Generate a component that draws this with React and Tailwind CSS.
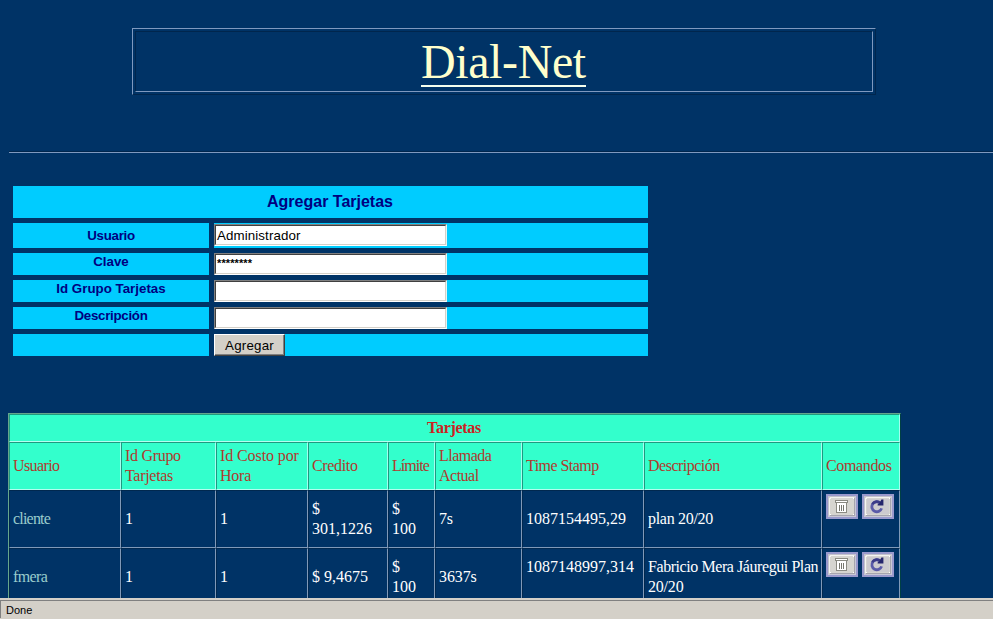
const field =
  "h-[22px] w-[233px] border border-t-[#808080] border-l-[#808080] border-r-[#e4f6f4] border-b-white bg-white";
const fieldInner =
  "flex h-[20px] items-center border border-t-[#404040] border-l-[#404040] border-r-[#d4d0c8] border-b-[#d4d0c8] pl-px text-[13.33px] leading-none text-black";
const label = "flex justify-center bg-[#00ccff] text-[13.33px] font-bold leading-[17px] text-[#000080]";

function FormRow({ text, tracking = "", height = "h-[22px]", pad = "", inputPad = "", children }) {
  return (
    <div className={`grid grid-cols-[196px_434px] gap-[5px] ${height}`}>
      <div className={`${label} ${pad}`}>
        <span className={tracking}>{text}</span>
      </div>
      <div className={`bg-[#00ccff] ${inputPad}`}>{children}</div>
    </div>
  );
}

function Field({ children }) {
  return (
    <div className={field}>
      <div className={fieldInner}>{children}</div>
    </div>
  );
}

function Cell({ head, color = "text-white", lines }) {
  const edge = head
    ? "bg-[#33ffcc] border-t-[#1f9980] border-l-[#1f9980] border-r-[#a3fff0] border-b-[#b3fff0]"
    : "border-t-[#00284f] border-l-[#00284f] border-r-[#8099b8] border-b-[#8099b8]";
  return (
    <div className={`flex flex-col justify-center whitespace-pre border pl-[3px] leading-5 ${edge} ${head ? "text-[#b03a2e]" : color}`}>
      {lines.map(([text, tracking], i) => (
        <div key={i} className={`h-5 ${tracking}`}>{text}</div>
      ))}
    </div>
  );
}

function ButtonFace({ children }) {
  return (
    <svg width="32" height="25" viewBox="-2 -2 32 25" shapeRendering="crispEdges">
      <rect x="-2" y="-2" width="32" height="25" fill="#9999cc" />
      <rect width="28" height="21" fill="#d6d5d0" />
      <path d="M0 0H28V1H1V21H0Z" fill="#c3c2cc" />
      <path d="M2 1H26V2H3V3H2V19H1V2H2Z" fill="#f4f4f2" />
      <path d="M26 2H27V20H2V19H26Z" fill="#a6a5ae" />
      <path d="M25 2H26V3H25ZM2 18H3V19H2ZM25 18H26V19H25Z" fill="#ffffff" />
      <path d="M27 0H28V21H0V20H27Z" fill="#c9c8d6" />
      {children}
    </svg>
  );
}

function TrashButton() {
  return (
    <ButtonFace>
      <rect x="7.5" y="4.5" width="12" height="2" fill="#fff" stroke="#8a8a82" />
      <rect x="8.5" y="6.5" width="10" height="10" fill="#fff" stroke="#8a8a82" />
      <path d="M11.5 9V15M13.5 9V15M15.5 9V15" stroke="#77776f" fill="none" />
    </ButtonFace>
  );
}

function ReloadButton() {
  return (
    <ButtonFace>
      <rect x="3" y="3" width="22" height="15" fill="#cdcbcf" />
      <g shapeRendering="geometricPrecision">
        <path d="M16.4 7.2A5 5 0 1 0 17.6 12.4" fill="none" stroke="#5a5aa8" strokeWidth="2.8" />
        <path d="M16 6.8A5 5 0 0 0 8.4 8.2" fill="none" stroke="#3a3a88" strokeWidth="2.6" />
        <path d="M19.4 3.4V9.6H13.6V8.6L15.6 7L17.4 3.4Z" fill="#25256c" />
      </g>
    </ButtonFace>
  );
}

function Commands() {
  return (
    <div className="flex gap-1 border border-t-[#00284f] border-l-[#00284f] border-r-[#8099b8] border-b-[#8099b8] pl-[3px] pt-[3px]">
      <TrashButton />
      <ReloadButton />
    </div>
  );
}

const headings = [
  [["Usuario", "tracking-[-0.6px]"]],
  [["Id Grupo", "tracking-[-0.3px]"], ["Tarjetas", "tracking-[-0.3px]"]],
  [["Id Costo por", "tracking-[-0.1px]"], ["Hora", "tracking-[-0.25px]"]],
  [["Credito", "tracking-[-0.35px]"]],
  [["Límite", "tracking-[-0.95px]"]],
  [["Llamada", "tracking-[-0.5px]"], ["Actual", "tracking-[-0.5px]"]],
  [["Time Stamp", "tracking-[-0.55px]"]],
  [["Descripción", "tracking-[-0.5px]"]],
  [["Comandos", "tracking-[-0.35px]"]],
];

const rows = [
  [
    [["cliente", "tracking-[-0.8px]"]],
    [["1", ""]],
    [["1", ""]],
    [["$", ""], ["301,1226", ""]],
    [["$", ""], ["100", ""]],
    [["7s", "tracking-[-0.2px]"]],
    [["1087154495,29", ""]],
    [["plan 20/20", "tracking-[-0.3px]"]],
  ],
  [
    [["fmera", "tracking-[-0.6px]"]],
    [["1", ""]],
    [["1", ""]],
    [["$ 9,4675", ""]],
    [["$", ""], ["100", ""]],
    [["3637s", "tracking-[-0.1px]"]],
    [["1087148997,314", ""], ["", ""]],
    [["Fabricio Mera Jáuregui Plan", "tracking-[-0.43px]"], ["20/20", "tracking-[-0.2px]"]],
  ],
];

const columns = "grid grid-cols-[112px_95px_92px_80px_47px_87px_122px_178px_78px]";

export default function App() {
  return (
    <div className="flex h-[620px] w-[993px] flex-col overflow-hidden bg-[#003366] font-['Liberation_Sans',Arial,sans-serif]">
      <main className="h-[598px] shrink-0 overflow-hidden pt-[28px]">
        <div className="ml-[132px] h-[67px] w-[744px] border border-t-[#7f99bf] border-l-[#7f99bf] border-r-[#00264d] border-b-[#00264d] p-[2px]">
          <div className="flex h-[61px] justify-center border border-t-[#00264d] border-l-[#00264d] border-r-[#7f99bf] border-b-[#7f99bf] pr-px">
            <h1 className="mt-[2px] h-[53px] w-[165px] whitespace-nowrap border-b-2 border-[#f4ffee] font-['Liberation_Serif','Times_New_Roman',serif] text-[48px] leading-[55px] tracking-[-0.4px] text-[#ffffcc]">
              Dial-Net
            </h1>
          </div>
        </div>

        <hr className="ml-[9px] mt-[56px] h-[2px] border-t border-b border-t-[#00264d] border-b-[#7f99bf]" />

        <form className="ml-[13px] mt-[33px] flex w-[635px] flex-col gap-[5px]">
          <div className="flex h-[32px] items-center justify-center bg-[#00ccff] pr-px text-[16px] font-bold leading-none text-[#000080]">
            Agregar Tarjetas
          </div>
          <FormRow text="Usuario" tracking="tracking-[-0.3px]" height="h-[25px]" pad="pt-[4px]" inputPad="pt-px">
            <Field>
              <span className="pt-[2px] tracking-[0.1px]">Administrador</span>
            </Field>
          </FormRow>
          <FormRow text="Clave">
            <Field>
              <span className="pb-[2px] text-[11px] font-bold tracking-[0.1px]">********</span>
            </Field>
          </FormRow>
          <FormRow text="Id Grupo Tarjetas">
            <Field />
          </FormRow>
          <FormRow text="Descripción" tracking="tracking-[-0.3px]">
            <Field />
          </FormRow>
          <FormRow text="">
            <button
              type="button"
              className="flex h-[22px] w-[71px] items-center justify-center border border-t-white border-l-white border-r-[#404040] border-b-[#404040] bg-[#d4d0c8] pt-[2px] text-[13.33px] leading-none tracking-[0.2px] text-black shadow-[inset_-1px_-1px_0_#808080]"
            >
              Agregar
            </button>
          </FormRow>
        </form>

        <section className="ml-[8px] mt-[57px] w-[893px] border border-b-0 border-t-[#66a68c] border-l-[#66a68c] border-r-[#004044] font-['Liberation_Serif','Times_New_Roman',serif] text-[16px]">
          <div className="flex h-[28px] items-center justify-center border border-t-[#1f9980] border-l-[#1f9980] border-r-[#a3fff0] border-b-[#b3fff0] bg-[#33ffcc] pr-px font-bold leading-5 tracking-[-0.3px] text-[#cc2222]">
            Tarjetas
          </div>
          <div className={`${columns} h-[48px]`}>
            {headings.map((lines, i) => (
              <Cell key={i} head lines={lines} />
            ))}
          </div>
          {rows.map((row, r) => (
            <div key={r} className={`${columns} h-[58px]`}>
              {row.map((lines, i) => (
                <Cell key={i} lines={lines} color={i === 0 ? "text-[#99cccc]" : "text-white"} />
              ))}
              <Commands />
            </div>
          ))}
        </section>
      </main>

      <footer className="flex h-[22px] shrink-0 flex-col border-b border-white bg-[#d4d0c8] pt-[2px]">
        <div className="flex h-[18px] items-center border-t border-l border-[#808080] pl-[5px] pt-px text-[11px] leading-none text-black">
          Done
        </div>
      </footer>
    </div>
  );
}
